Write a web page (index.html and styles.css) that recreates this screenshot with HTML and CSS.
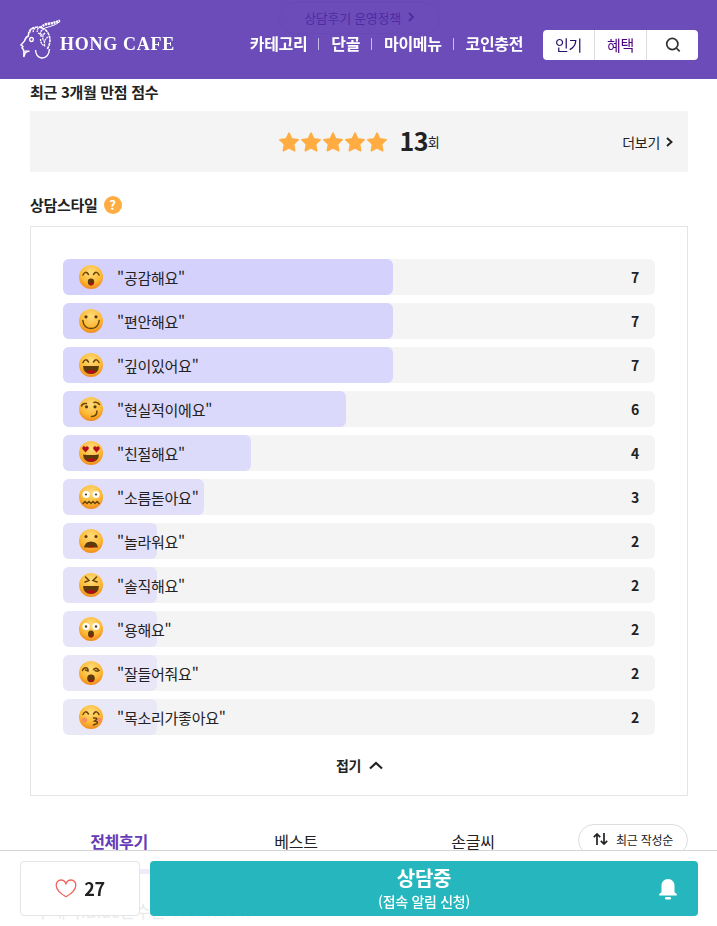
FILE: index.html
```html
<!DOCTYPE html>
<html lang="ko">
<head>
<meta charset="utf-8">
<title>HONG CAFE</title>
<link rel="stylesheet" href="styles.css">
</head>
<body>
<svg class="defs" width="0" height="0">
  <defs>
    <radialGradient id="skin" cx=".5" cy=".3" r=".75"><stop offset="0" stop-color="#ffdc7c"/><stop offset=".6" stop-color="#fdb935"/><stop offset="1" stop-color="#ef8118"/></radialGradient>
    <symbol id="face" viewBox="0 0 24 24"><circle cx="12" cy="12" r="12" fill="url(#skin)"/></symbol>
    <symbol id="star" viewBox="0 0 20 20"><path d="M10 1l2.700 5.800 6.500.9-4.700 4.500 1.200 6.500L10 15.700l-5.700 3 1.200-6.500L.8 7.700l6.500-.9z" fill="#ffad42" stroke="#ffad42" stroke-width="1.600" stroke-linejoin="round"/></symbol>
  </defs>
</svg>

<header class="header">
  <a class="logo">
    <svg width="156" height="42" viewBox="0 0 156 42" fill="none" stroke="#fff">
      <path d="M9 16.500Q5.500 18 4.500 22L1 26l2 1.500-1 1.500 1.500 1.500v1.500l6 .2M3.800 32v6l1.600-4.500 3-1.500M15.500 31q.5 7 6 8 7 .5 8-9" stroke-width="1.400"/>
      <path d="M8.500 16q0-7 9-8 8 .5 11 7 3.500 7-1.500 15.500" stroke-width="1.600" stroke-dasharray="3 .6"/>
      <path d="M11.500 9.500q-2 2-1.500 5M15 9q-2.500 2.500-1.500 5M18.500 9q-2 2-1 4M22 11q-3 3-.5 7M25 14q-4 4-1 8M28 18q-5 3-3 10M20.500 20q0 5 4 7M18 14q5 3 7 0" stroke-width="1.300" stroke-dasharray="2 .7"/>
      <path d="M20.500 9q3-3.500 8-4.300Q35 4 40 1.500" stroke-width="2.400" stroke-dasharray="2.200 .6"/>
      <path d="M21 12q4-4 9-4.500Q36 6 40 2.500"/>
      <ellipse cx="11.500" cy="20.500" rx="1.800" ry="2" stroke-width="1.300"/>
      <text class="logo-text" x="40" y="31" textLength="114" lengthAdjust="spacing">HONG CAFE</text>
    </svg>
  </a>
  <nav class="nav"><a>카테고리</a><a>단골</a><a>마이메뉴</a><a>코인충전</a></nav>
  <div class="quick">
    <a class="hot">인기</a><a class="benefit">혜택</a>
    <a><svg width="16" height="16" viewBox="0 0 16 16" fill="none" stroke="#333" stroke-width="1.700"><circle cx="7.300" cy="7" r="5.600"/><path d="M11.300 11l3.400 3.400"/></svg></a>
  </div>
</header>

<main class="page">
  <a class="policy">상담후기 운영정책 <svg width="6" height="10" viewBox="0 0 6 10" fill="none" stroke="currentColor" stroke-width="1.800"><path d="M1 1l4 4-4 4"/></svg></a>
  <h2 class="title recent">최근 3개월 만점 점수</h2>
  <section class="score">
    <div class="stars"><svg><use href="#star"/></svg><svg><use href="#star"/></svg><svg><use href="#star"/></svg><svg><use href="#star"/></svg><svg><use href="#star"/></svg></div>
    <strong>13</strong><span class="unit">회</span>
    <a class="more">더보기 <svg width="7" height="10" viewBox="0 0 7 10" fill="none" stroke="#222" stroke-width="1.900"><path d="M1 1l4.500 4L1 9"/></svg></a>
  </section>
  <h2 class="title style-title">상담스타일 <i class="help">?</i></h2>

  <section class="panel">
    <ul class="bars">
      <li><div class="fill w7 c1"></div><svg class="emoji" viewBox="0 0 24 24"><use href="#face"/><g class="ink"><path d="M4 10q2.500-5 5.500-.5M14.500 9.500q3-4.500 5.500.5"/></g><ellipse class="mouth" cx="12" cy="17" rx="3.200" ry="3.400"/><ellipse class="tongue" cx="12" cy="19" rx="2" ry="1.200"/></svg><span>"공감해요"</span><b>7</b></li>
      <li><div class="fill w7 c2"></div><svg class="emoji" viewBox="0 0 24 24"><use href="#face"/><g class="dot"><circle cx="7" cy="7.800" r="1.600"/><circle cx="17" cy="7.800" r="1.600"/></g><path class="ink" d="M3.800 11.500q1 8 8.200 8t8.200-8"/></svg><span>"편안해요"</span><b>7</b></li>
      <li><div class="fill w7 c3"></div><svg class="emoji" viewBox="0 0 24 24"><use href="#face"/><path class="ink" d="M4 9.500q2.500-5 5.500-.5M14.500 9q3-4.500 5.500.5"/><path class="mouth" d="M4 13h16q-.5 8-8 8t-8-8z"/><path class="tongue" d="M7 18.500q5-3 10 0-4 4.500-10 0z"/></svg><span>"깊이있어요"</span><b>7</b></li>
      <li><div class="fill w6 c4"></div><svg class="emoji" viewBox="0 0 24 24"><use href="#face"/><g class="dot"><circle cx="7.500" cy="9.800" r="1.600"/><circle cx="16" cy="9.800" r="1.600"/></g><path class="ink" d="M2.500 9q1-3 5-2.500M15 5.500q3.500-1 5.500 2M12.500 19.500q5.500 0 5.500-5.500"/></svg><span>"현실적이에요"</span><b>6</b></li>
      <li><div class="fill w4 c5"></div><svg class="emoji" viewBox="0 0 24 24"><use href="#face"/><g fill="#b30d17"><path d="M6.500 11.500L3.400 8q-.3-3 2-2.700l1.100 1 1.200-1q2.500-.2 2 2.700zM17.500 11.500L14.300 8q-.3-3 2-2.700l1.200 1 1.200-1q2.300-.2 2 2.700z"/></g><path class="mouth" d="M4 13.500q8 1 16 0-.5 7.500-8 7.500t-8-7.500z"/><path class="tongue" d="M7 18.700q5-3 10 0-4 4.300-10 0z"/></svg><span>"친절해요"</span><b>4</b></li>
      <li><div class="fill w3 c6"></div><svg class="emoji" viewBox="0 0 24 24"><use href="#face"/><g fill="#fff"><circle cx="7" cy="9.500" r="3.600"/><circle cx="17" cy="9.500" r="3.600"/></g><g class="dot"><circle cx="7" cy="9.500" r="1.100"/><circle cx="17" cy="9.500" r="1.100"/></g><path class="ink" d="M4 18.500l2-2 2 2 2-2 2 2 2-2 2 2 2-2 2 2"/></svg><span>"소름돋아요"</span><b>3</b></li>
      <li><div class="fill w2 c7"></div><svg class="emoji" viewBox="0 0 24 24"><use href="#face"/><g class="dot"><circle cx="7" cy="7.500" r="1.500"/><circle cx="17" cy="7.500" r="1.500"/></g><path class="mouth" d="M5 18.500q1-6 7-6t7 6z"/><path class="tongue" d="M9 18.500q3-3 6 0z"/></svg><span>"놀라워요"</span><b>2</b></li>
      <li><div class="fill w2 c8"></div><svg class="emoji" viewBox="0 0 24 24"><use href="#face"/><path class="ink" d="M6.500 4L10 7.500 6 9M17.500 4L14 7.500 18 9"/><path class="mouth" d="M4 13h16q-.5 8-8 8t-8-8z"/><path class="tongue" d="M7 18.500q5-3 10 0-4 4.500-10 0z"/></svg><span>"솔직해요"</span><b>2</b></li>
      <li><div class="fill w2 c9"></div><svg class="emoji" viewBox="0 0 24 24"><use href="#face"/><g fill="#fff"><circle cx="7" cy="9.500" r="3.600"/><circle cx="17" cy="9.500" r="3.600"/></g><g class="dot"><circle cx="7" cy="9.500" r="1.200"/><circle cx="17" cy="9.500" r="1.200"/></g><ellipse class="mouth" cx="12" cy="17" rx="3" ry="3.500"/><ellipse class="tongue" cx="12" cy="19.300" rx="1.800" ry="1.100"/></svg><span>"용해요"</span><b>2</b></li>
      <li><div class="fill w2 c10"></div><svg class="emoji" viewBox="0 0 24 24"><use href="#face"/><path class="ink" d="M3.500 9.500Q5 6 8 7q1.500 1 1 3l-2.500-1M14.500 8.500Q17 5.500 20 9.500l-1.500.8-2.500-.8"/><ellipse class="mouth" cx="12" cy="17.300" rx="3.800" ry="3.900"/><ellipse class="tongue" cx="12" cy="19.700" rx="2" ry="1.200"/></svg><span>"잘들어줘요"</span><b>2</b></li>
      <li><div class="fill w2 c11"></div><svg class="emoji" viewBox="0 0 24 24"><use href="#face"/><g fill="#f88d62"><circle cx="5.500" cy="15" r="2.600"/><circle cx="20" cy="15" r="2.600"/></g><path class="ink" d="M4 9.500q2.500-5 5.500-.5M14.500 9q3-4.500 5.500.5M14.500 13q4-.5 3 1.500l-2 1.500q4 .5 2.500 2.500L14.500 20"/></svg><span>"목소리가좋아요"</span><b>2</b></li>
    </ul>
    <a class="fold">접기 <svg width="14" height="9" viewBox="0 0 14 9" fill="none" stroke="#222" stroke-width="2.200"><path d="M1 7.500l6-5.500 6 5.500"/></svg></a>
  </section>

  <div class="tabs">
    <a class="active">전체후기</a><a>베스트</a><a>손글씨</a>
    <button class="sort"><svg width="15" height="12" viewBox="0 0 15 12" fill="none" stroke="#222" stroke-width="1.700"><path d="M4 12V1M.8 4.200L4 1l3.200 3.200M11 0v11M7.800 7.800L11 11l3.200-3.200"/></svg>최근 작성순</button>
  </div>
  <p class="review">구매자iBlue은수는 <span>★★★★★</span></p>
</main>

<footer class="bottom">
  <a class="like"><svg width="22" height="19" viewBox="0 0 22 19" fill="none" stroke="#f0625f" stroke-width="1.300"><path d="M11 17.800C7 15.500 1.500 11.500 1.200 6.500 1 3 3.300 1 6 1c2.300 0 4 1.300 5 3.700C12 2.300 13.700 1 16 1c2.700 0 5 2 4.800 5.500-.3 5-5.800 9-9.800 11.300z"/></svg>27</a>
  <a class="call"><strong>상담중</strong><span>(접속 알림 신청)</span>
    <svg class="bell" width="18" height="21" viewBox="0 0 18 21" fill="#fff"><path d="M9 0c4 0 6.500 3 6.500 6.500V13l2.300 2.200c.4.500.2 1.300-.6 1.300H.8c-.8 0-1-.8-.6-1.300L2.500 13V6.500C2.500 3 5 0 9 0z"/><rect x="6" y="18" width="6" height="2.600" rx="1.300"/></svg></a>
</footer>
</body>
</html>
```

FILE: styles.css
```css
* { box-sizing: border-box; margin: 0; padding: 0; }
html, body { height: 926px; overflow: hidden; }
body { font-family: "Noto Sans CJK KR", "Noto Sans", sans-serif; color: #222; background: #fff; letter-spacing: -.3px; }
svg { display: block; flex: none; }
.defs { position: absolute; }

.header { position: fixed; inset: 0 0 auto; z-index: 2; height: 79px; display: flex; align-items: flex-start; padding: 0 19px 0 20px; background: rgba(85, 49, 173, .87); }
.logo { margin-top: 19px; }
.logo-text { font: bold 18px "Liberation Serif", serif; fill: #fff; stroke: none; }
.nav { display: flex; margin: 31px 20px 0 auto; font-size: 16px; font-weight: 700; line-height: 24px; color: #fff; letter-spacing: -.35px; }
.nav a { display: flex; align-items: center; }
.nav a + a::before { content: ""; width: 1px; height: 12px; margin: 2px 12px 0 11px; background: #c9bde6; }
.quick { display: flex; width: 155px; height: 30px; margin-top: 30px; border-radius: 4px; background: #fff; font-size: 15px; line-height: 28px; }
.quick a { flex: 1; display: flex; align-items: center; justify-content: center; padding-bottom: 1px; }
.quick a + a { border-left: 1px solid #ddd; }
.hot { color: #22106b; }
.benefit { color: #4b0082; }

.page { padding: 2px 29px 0 30px; }
.policy { display: flex; align-items: center; justify-content: center; gap: 7px; width: 161px; height: 32px; margin: 0 auto; padding-bottom: 2px; border: 1px solid #e0e0e0; border-radius: 16px; font-size: 13px; color: #20005a; }
.title { display: flex; align-items: center; font-size: 15px; line-height: 22px; font-weight: 700; }
.recent { margin-top: 47px; }
.score { position: relative; display: flex; align-items: center; justify-content: center; height: 61px; margin-top: 8px; background: #f4f4f4; font-size: 13px; }
.stars { display: flex; gap: 2px; margin-right: 13px; }
.stars svg { width: 20px; height: 20px; }
.score strong { padding-bottom: 3px; font-size: 25px; line-height: 36px; letter-spacing: -.6px; }
.unit { padding-bottom: 1px; }
.more { position: absolute; right: 15px; top: 20px; display: flex; align-items: center; gap: 6px; font-size: 14px; line-height: 22px; }
.style-title { margin-top: 22px; gap: 6px; }
.help { display: flex; align-items: center; justify-content: center; width: 18px; height: 18px; border-radius: 50%; background: #ffad42; color: #fff; font-style: normal; font-size: 13px; line-height: 18px; }

.panel { height: 570px; margin-top: 10px; padding: 32px; border: 1px solid #e5e5e5; }
.bars { display: grid; gap: 8px; list-style: none; }
.bars li { position: relative; display: flex; align-items: center; height: 36px; padding: 0 16px; border-radius: 6px; background: #f4f4f4; font-size: 15px; line-height: 36px; letter-spacing: -.25px; }
.fill { position: absolute; inset: 0 auto 0 0; border-radius: 6px; }
.w7 { width: 330px; } .w6 { width: 283px; } .w4 { width: 188px; } .w3 { width: 141px; } .w2 { width: 94px; }
.c1 { background: #d4d1fd; } .c2 { background: #d7d4fc; } .c3 { background: #d9d7fc; } .c4 { background: #dbd9fb; }
.c5 { background: #dddbfa; } .c6 { background: #e0def9; } .c7 { background: #e3e0f9; } .c8 { background: #e3e2f8; }
.c9 { background: #e5e4f8; } .c10 { background: #e8e6f7; } .c11 { background: #e9e8f6; }
.emoji { position: relative; width: 24px; height: 24px; margin-right: 14px; }
.ink { fill: none; stroke: #684306; stroke-width: 1.500; stroke-linecap: round; }
.dot, .mouth { fill: #5c3a09; }
.tongue { fill: #b60b17; }
.bars span, .bars b { position: relative; }
.bars span { padding-top: 2px; }
.bars b { margin-left: auto; font-size: 14px; }
.fold { display: flex; align-items: center; justify-content: center; gap: 8px; margin-top: 19px; padding-left: 1px; font-size: 14px; line-height: 22px; font-weight: 700; }

.tabs { display: flex; height: 54px; margin-top: 24px; font-size: 16px; line-height: 34px; text-align: center; background: linear-gradient(#e5e5e5, #e5e5e5) 0 51px / 100% 1px no-repeat; }
.tabs a { width: 177px; height: 54px; padding: 4px 0 0 1px; }
.tabs .active { font-weight: 700; color: #673ab7; border-bottom: 5px solid #673ab7; }
.sort { display: flex; align-items: center; justify-content: center; gap: 8px; width: 110px; height: 32px; margin: 4px 0 0 auto; padding-bottom: 2px; border: 1px solid #ddd; border-radius: 16px; background: #fff; color: #222; font: 12px "Noto Sans CJK KR", sans-serif; letter-spacing: -.3px; }
.review { margin-top: 24px; padding-left: 5px; font-size: 17px; line-height: 26px; }
.review span { color: #ffad42; }

.bottom { position: fixed; inset: auto 0 0; z-index: 2; display: flex; gap: 10px; height: 76px; padding: 10px 19px 10px 20px; border-top: 1px solid #d5d5d5; background: rgba(255, 255, 255, .9); }
.like { display: flex; align-items: center; justify-content: center; gap: 7px; width: 120px; height: 55px; padding-bottom: 1px; border: 1px solid #e5e5e5; border-radius: 4px; background: #fff; font-size: 18px; font-weight: 700; }
.call { position: relative; flex: 1; display: flex; flex-direction: column; align-items: center; height: 55px; border-radius: 4px; background: #25b7bd; color: #fff; }
.call strong { margin-top: 3px; font-size: 20px; line-height: 28px; }
.call span { font-size: 14px; line-height: 18px; font-weight: 500; }
.bell { position: absolute; right: 21px; top: 18px; }
```
